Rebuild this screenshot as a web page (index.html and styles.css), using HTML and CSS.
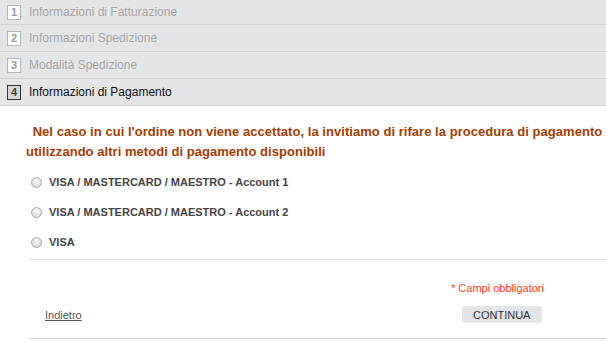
FILE: index.html
```html
<!DOCTYPE html>
<html lang="it">

<head>
    <meta charset="UTF-8">
    <meta name="viewport" content="width=device-width, initial-scale=1.0">
    <title>Checkout - Pagamento</title>
    <link rel="stylesheet" href="styles.css">
</head>

<body>
    <ul class="steps">
        <li class="step"><span class="step-num">1</span>Informazioni di Fatturazione</li>
        <li class="step"><span class="step-num">2</span>Informazioni Spedizione</li>
        <li class="step"><span class="step-num">3</span>Modalità Spedizione</li>
        <li class="step active"><span class="step-num">4</span>Informazioni di Pagamento</li>
    </ul>

    <div class="payment">
        <p class="notice">&nbsp;Nel caso in cui l'ordine non viene accettato, la invitiamo di rifare la procedura di pagamento<br>utilizzando altri metodi di pagamento disponibili</p>

        <ul class="methods">
            <li><label><input type="radio" name="method" value="acc1"> VISA / MASTERCARD / MAESTRO - Account 1</label></li>
            <li><label><input type="radio" name="method" value="acc2"> VISA / MASTERCARD / MAESTRO - Account 2</label></li>
            <li><label><input type="radio" name="method" value="visa"> VISA</label></li>
        </ul>

        <div class="actions">
            <p class="required">* Campi obbligatori</p>
            <div class="buttons">
                <a href="#" class="back">Indietro</a>
                <button type="button" class="continue">CONTINUA</button>
            </div>
        </div>
    </div>
</body>

</html>
```

FILE: styles.css
```css
body {
    font-family: Arial, "Liberation Sans", sans-serif;
    margin: 0;
    background: #fff;
    overflow: hidden;
}

.steps {
    list-style: none;
    margin: 0;
    padding: 0;
}

.step {
    display: flex;
    align-items: center;
    height: 26px;
    background: #e4e5e7;
    border-bottom: 1px solid #d3d3d5;
    padding-left: 7px;
    font-size: 12px;
    color: #a4a4a4;
}

.step:first-child {
    height: 24px;
}

.step-num {
    display: inline-block;
    width: 12px;
    height: 13px;
    line-height: 13px;
    text-align: center;
    background: #fff;
    border: 1px solid #b4b4b4;
    margin-right: 8px;
    font-size: 11px;
    font-weight: bold;
    color: #999;
}

.step.active {
    color: #111;
}

.step.active .step-num {
    background: #d8d8d8;
    border-color: #333;
    color: #444;
}

.payment {
    padding-left: 29px;
}

.notice {
    margin: 16px 0 0 -3px;
    text-indent: 3px;
    font-size: 13px;
    font-weight: bold;
    line-height: 20px;
    letter-spacing: 0.04px;
    color: #a53c00;
}

.methods {
    list-style: none;
    margin: 5px 0 0 0;
    padding: 0 0 2px 0;
    border-bottom: 1px solid #dcdcdc;
}

.methods li {
    height: 30px;
    display: flex;
    align-items: center;
}

.methods label {
    display: flex;
    align-items: center;
    font-size: 11px;
    font-weight: bold;
    color: #444;
}

.methods input {
    appearance: none;
    -webkit-appearance: none;
    width: 11px;
    height: 11px;
    margin: 0 7px 0 2px;
    border: 1px solid #a9a9a9;
    border-radius: 50%;
    background: radial-gradient(circle at 50% 35%, #fafafa 0%, #dcdcdc 70%, #c8c8c8 100%);
}

.actions {
    border-bottom: 1px solid #dcdcdc;
    padding-bottom: 15px;
}

.required {
    margin: 22px 0 0 0;
    padding-left: 422px;
    font-size: 11px;
    color: #ff3b1c;
}

.buttons {
    display: flex;
    align-items: center;
    margin-top: 12px;
}

.back {
    margin-left: 16px;
    font-size: 11px;
    color: #555;
}

.continue {
    margin-left: 380px;
    width: 80px;
    height: 17px;
    padding: 0;
    border: none;
    border-radius: 3px;
    background: #e4e5e7;
    font-family: Arial, "Liberation Sans", sans-serif;
    font-size: 11px;
    color: #333;
}
```
